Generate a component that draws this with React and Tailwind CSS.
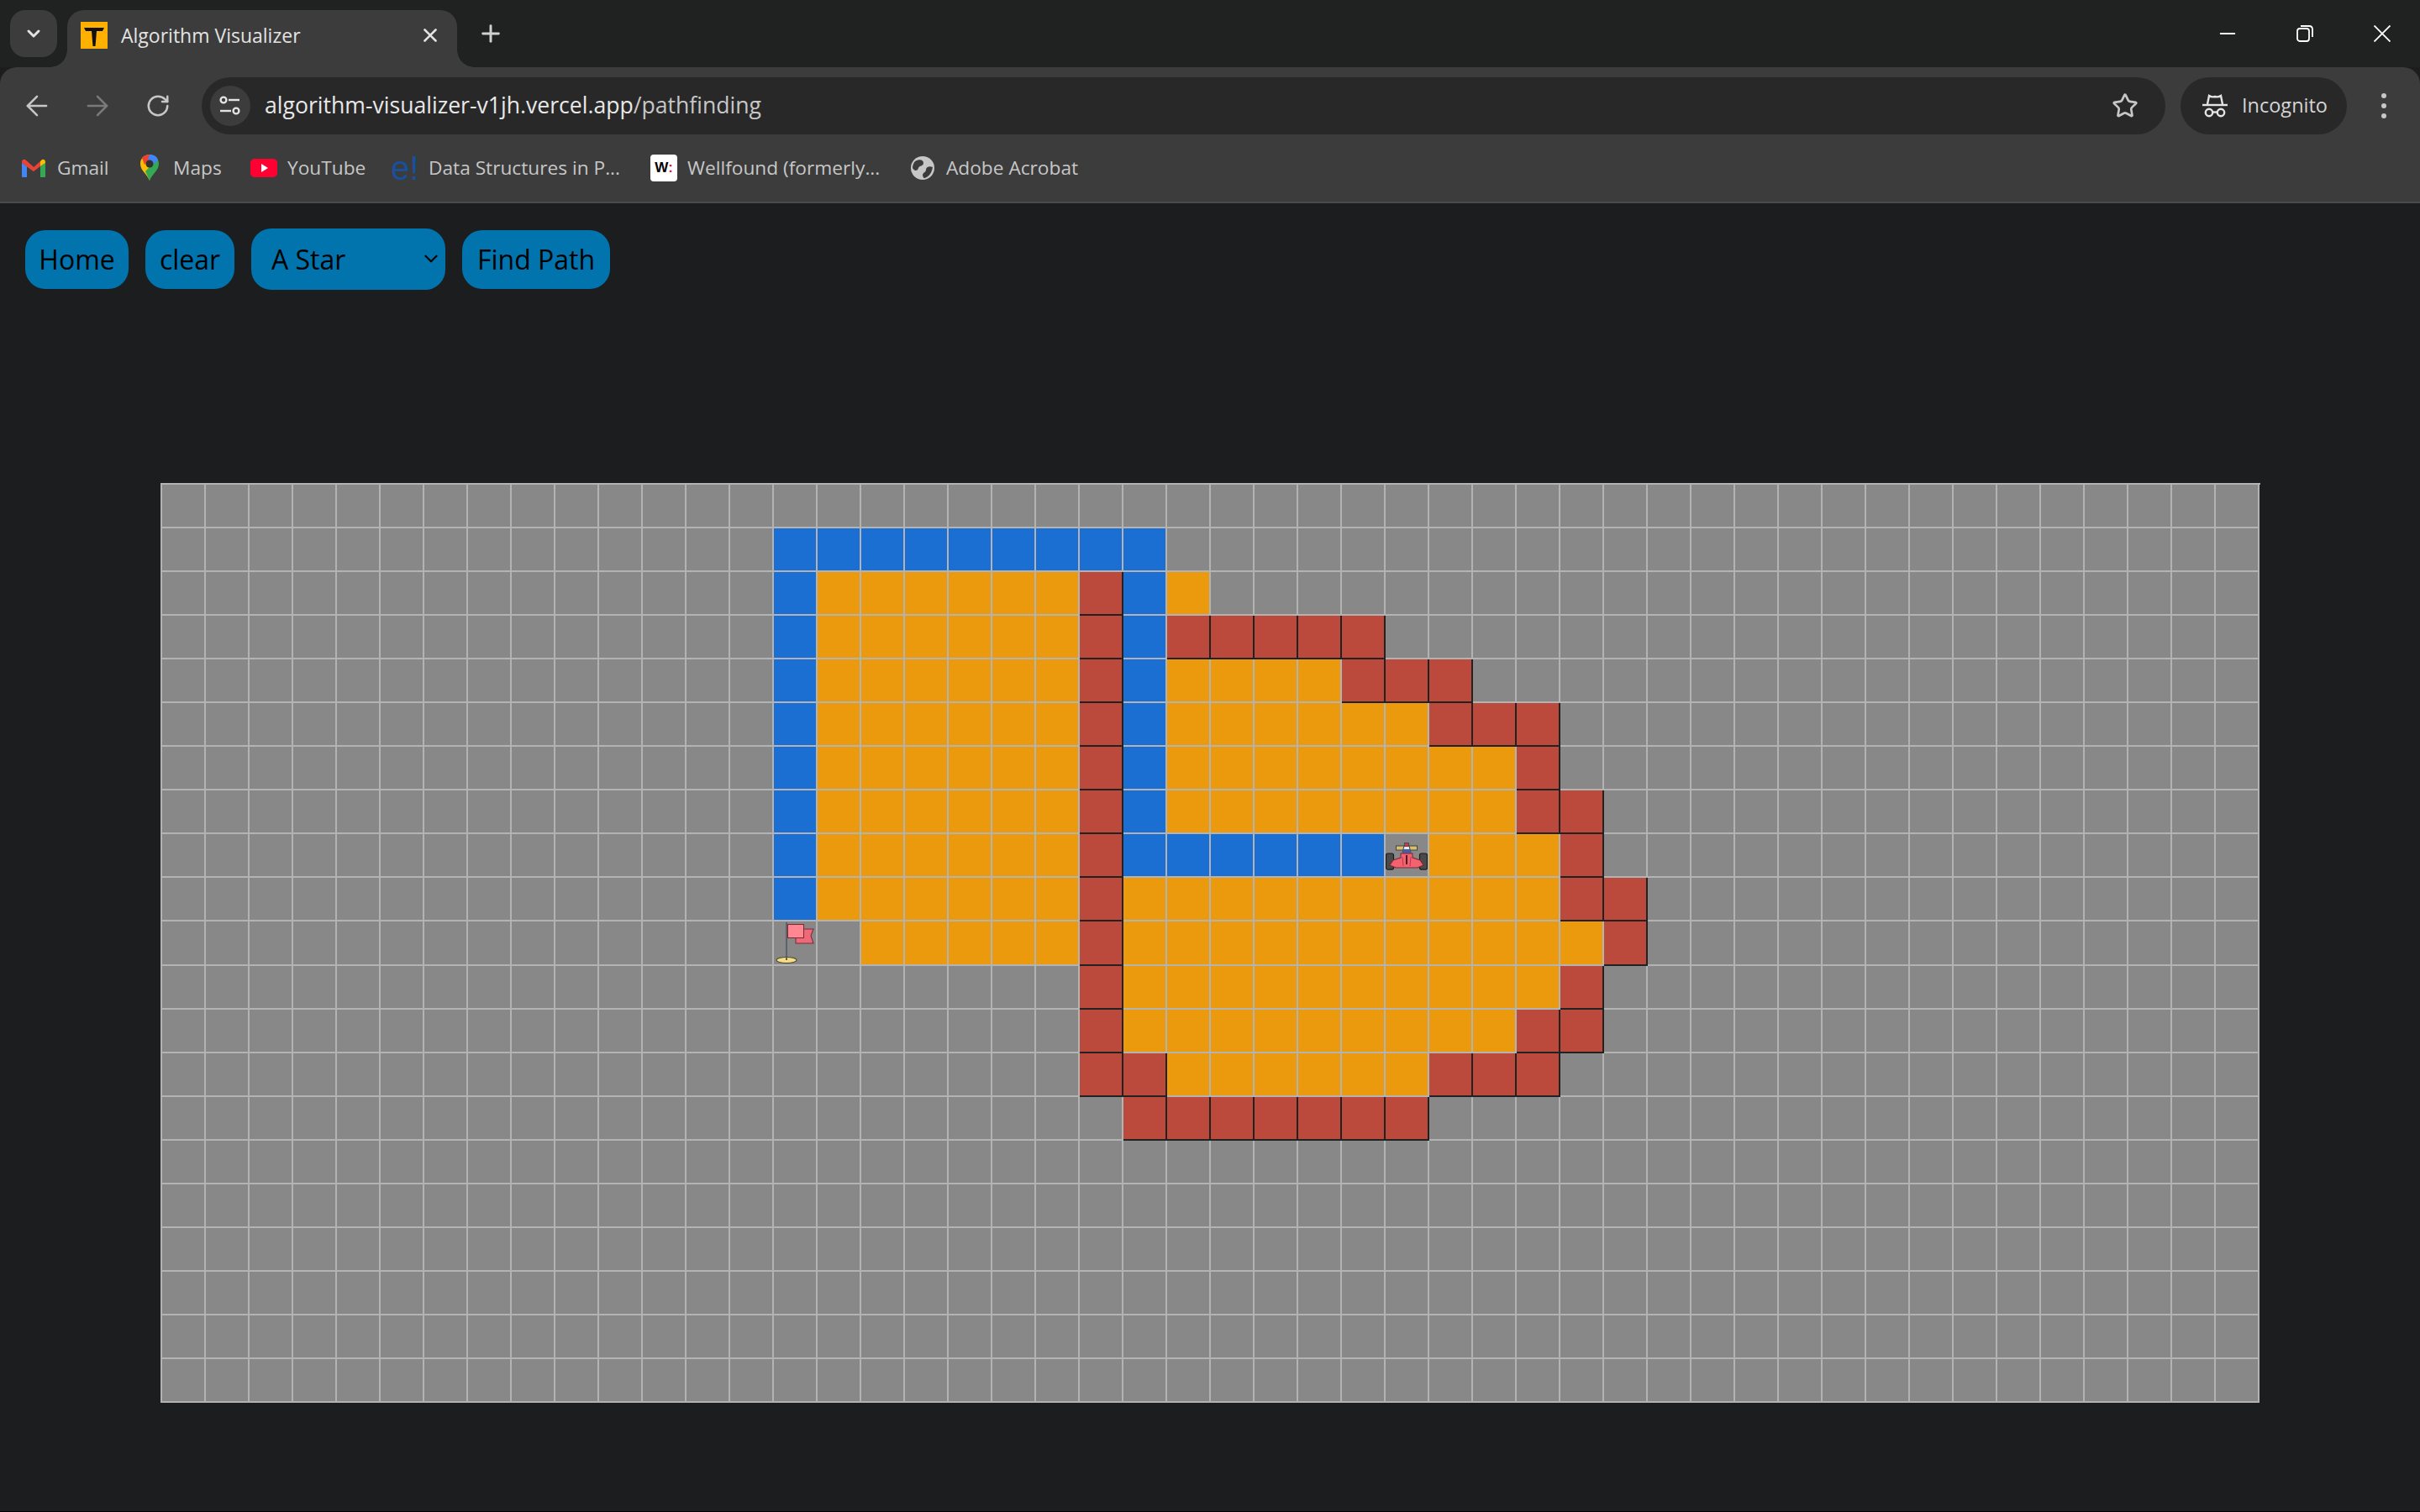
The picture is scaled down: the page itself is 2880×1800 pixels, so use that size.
// Pathfinding visualizer page inside an incognito browser window
import { ArrowLeft, ArrowRight, RotateCw, Star, X, Plus, ChevronDown, Minus } from 'lucide-react';

const UI_FONT = 'font-["Open_Sans","Liberation_Sans",sans-serif]';

// start col, end col, type per row: b = blue path, o = orange visited, r = red wall
const ROWS = {
  1: [[14, 22, 'b']],
  2: [[14, 14, 'b'], [15, 20, 'o'], [21, 21, 'r'], [22, 22, 'b'], [23, 23, 'o']],
  3: [[14, 14, 'b'], [15, 20, 'o'], [21, 21, 'r'], [22, 22, 'b'], [23, 27, 'r']],
  4: [[14, 14, 'b'], [15, 20, 'o'], [21, 21, 'r'], [22, 22, 'b'], [23, 26, 'o'], [27, 29, 'r']],
  5: [[14, 14, 'b'], [15, 20, 'o'], [21, 21, 'r'], [22, 22, 'b'], [23, 28, 'o'], [29, 31, 'r']],
  6: [[14, 14, 'b'], [15, 20, 'o'], [21, 21, 'r'], [22, 22, 'b'], [23, 30, 'o'], [31, 31, 'r']],
  7: [[14, 14, 'b'], [15, 20, 'o'], [21, 21, 'r'], [22, 22, 'b'], [23, 30, 'o'], [31, 32, 'r']],
  8: [[14, 14, 'b'], [15, 20, 'o'], [21, 21, 'r'], [22, 27, 'b'], [29, 31, 'o'], [32, 32, 'r']],
  9: [[14, 14, 'b'], [15, 20, 'o'], [21, 21, 'r'], [22, 31, 'o'], [32, 33, 'r']],
  10: [[16, 20, 'o'], [21, 21, 'r'], [22, 32, 'o'], [33, 33, 'r']],
  11: [[21, 21, 'r'], [22, 31, 'o'], [32, 32, 'r']],
  12: [[21, 21, 'r'], [22, 30, 'o'], [31, 32, 'r']],
  13: [[21, 22, 'r'], [23, 28, 'o'], [29, 31, 'r']],
  14: [[22, 28, 'r']],
};

const CELL = {
  b: 'bg-[#1b6fd2] border-[#b3b3b3]',
  o: 'bg-[#ea9a0c] border-[#b3b3b3]',
  r: 'bg-[#bb4a3c] border-[#222222]',
  g: 'bg-[#888888] border-[#b3b3b3]',
};

function cellType(r, c) {
  const run = (ROWS[r] || []).find(([a, b]) => c >= a && c <= b);
  return run ? run[2] : 'g';
}

function Car() {
  return (
    <svg viewBox="0 0 50 50" className="w-full h-full block">
      <rect x="12.5" y="14" width="25" height="5" fill="#d9c06a" stroke="#444" strokeWidth="1" />
      <rect x="0.5" y="23" width="9" height="19" rx="2" fill="#4a4a4a" stroke="#1c1c1c" strokeWidth="1.2" />
      <rect x="40.5" y="23" width="9" height="19" rx="2" fill="#4a4a4a" stroke="#1c1c1c" strokeWidth="1.2" />
      <path d="M9 31 L18 28 L18 23 L32 23 L32 28 L41 31 L45 37 L38 40 L12 40 L5 37 Z" fill="#f4616f" stroke="#7a2a34" strokeWidth="1" />
      <path d="M20 22 L22 14 L28 14 L30 22 Z" fill="#e8e8f0" stroke="#444" strokeWidth="1" />
      <rect x="20.5" y="18" width="9" height="4" fill="#4a5aa8" />
      <rect x="22.5" y="10.5" width="5" height="4" fill="#c93a48" stroke="#444" strokeWidth="0.8" />
      <path d="M25 25 V36" stroke="#4a1a22" strokeWidth="2" />
      <path d="M20 27 L21 38 M30 27 L29 38" stroke="#b83a4a" strokeWidth="1" />
    </svg>
  );
}

function Flag() {
  return (
    <svg viewBox="0 0 50 50" className="w-full h-full block">
      <ellipse cx="15" cy="46" rx="12" ry="3.5" fill="#f8dc84" stroke="#4a4a3a" strokeWidth="1" />
      <path d="M26 9 H47 L44 17 L47 26 H26 Z" fill="#ee6a78" stroke="#7a2a34" strokeWidth="1" />
      <rect x="16.5" y="3.5" width="19" height="16" fill="#ff8791" stroke="#7a2a34" strokeWidth="1" />
      <rect x="14" y="1" width="2" height="45" fill="#5d6266" />
    </svg>
  );
}

function Grid() {
  const cells = [];
  for (let r = 0; r < 21; r++) {
    for (let c = 0; c < 48; c++) {
      cells.push(
        <div key={`${r}-${c}`} className={`border-r-2 border-b-2 min-w-0 min-h-0 ${CELL[cellType(r, c)]}`}>
          {r === 8 && c === 28 && <Car />}
          {r === 10 && c === 14 && <Flag />}
        </div>
      );
    }
  }
  return (
    <div className="mx-auto mt-[230px] w-[2499px] h-[1095px] grid grid-cols-[repeat(48,minmax(0,1fr))] grid-rows-[repeat(21,minmax(0,1fr))] border-l-2 border-t-2 border-[#b3b3b3]">
      {cells}
    </div>
  );
}

function Favicon() {
  return (
    <svg viewBox="0 0 32 32" className="w-8 h-8 shrink-0">
      <rect width="32" height="32" fill="#ffb000" />
      <path d="M4 7 H28 L26 11 H19 L17.5 29 H14.5 L13 11 H6 Z" fill="#111" />
    </svg>
  );
}

function Gmail() {
  return (
    <svg viewBox="0 0 32 32" className="w-8 h-8">
      <path d="M2 10 V26 Q2 27 3 27 H8 V14 Z" fill="#4285f4" />
      <path d="M30 10 V26 Q30 27 29 27 H24 V14 Z" fill="#34a853" />
      <path d="M2 10 Q2 5 6 6 L16 15 L16 20 L2 10 Z" fill="#ea4335" />
      <path d="M8 8 L16 15 L24 8 V14 L16 20 L8 14 Z" fill="#ea4335" />
      <path d="M30 10 Q30 5 26 6 L24 8 V14 Z" fill="#fbbc04" />
    </svg>
  );
}

function Maps() {
  return (
    <svg viewBox="0 0 32 32" className="w-8 h-8">
      <path d="M16 0 C9 0 5 5 5 11 C5 19 13 23 16 31 L16 16 Z" fill="#fbbc04" />
      <path d="M16 0 C23 0 27 5 27 11 C27 19 19 23 16 31 L11 20 L22 8 Z" fill="#34a853" />
      <path d="M7 4 C9 1 13 0 16 0 L16 6 L10 12 Z" fill="#ea4335" />
      <path d="M16 0 C21 0 25 2 26 7 L20 12 L14 5 Z" fill="#4285f4" />
      <circle cx="16" cy="11" r="4.5" fill="#33302d" />
    </svg>
  );
}

function YouTube() {
  return (
    <svg viewBox="0 0 32 32" className="w-8 h-8">
      <rect x="0" y="5" width="32" height="22" rx="5" fill="#ff0033" />
      <path d="M13 11 L21 16 L13 21 Z" fill="#fff" />
    </svg>
  );
}

function Globe() {
  return (
    <svg viewBox="0 0 32 32" className="w-8 h-8">
      <circle cx="16" cy="16" r="14" fill="#c7c7c7" />
      <path d="M7 8 C12 5 17 6 17 10 C17 14 12 13 11 16 C10 20 6 20 4 16 C4 13 5 10 7 8 Z" fill="#3c3c3c" />
      <path d="M28 15 C24 13 20 15 20 18 C20 21 17 21 16 24 C16 26 17 28 18 28 C23 27 27 22 28 15 Z" fill="#3c3c3c" />
    </svg>
  );
}

const BOOKMARKS = [
  { label: 'Gmail', width: 'w-[138px]', icon: <Gmail /> },
  { label: 'Maps', width: 'w-[136px]', icon: <Maps /> },
  { label: 'YouTube', width: 'w-[168px]', icon: <YouTube /> },
  {
    label: 'Data Structures in P...',
    width: 'w-[308px]',
    icon: <span className='w-8 h-8 flex items-center justify-center text-[40px] leading-none text-[#17509c] font-["Liberation_Sans",sans-serif]'>e!</span>,
  },
  {
    label: 'Wellfound (formerly...',
    width: 'w-[308px]',
    icon: (
      <span className='w-8 h-8 rounded bg-white flex items-center justify-center text-[17px] font-bold text-black font-["Liberation_Sans",sans-serif]'>
        W<span className="text-[#e0202a]">:</span>
      </span>
    ),
  },
  { label: 'Adobe Acrobat', width: 'w-[204px]', icon: <Globe /> },
];

function TabStrip() {
  return (
    <div className="h-20 bg-[#202222] flex items-start pl-3 pt-3">
      <div className="w-14 h-14 rounded-[18px] bg-[#3c3c3c] flex items-center justify-center">
        <ChevronDown size={24} strokeWidth={3} className="text-[#e3e3e3]" />
      </div>
      <div className="relative ml-3 w-[464px] h-[68px] bg-[#3c3c3c] rounded-t-[20px] flex items-center pl-4 pr-[19px] pb-2">
        <div className="absolute bottom-0 -left-5 w-5 h-5 bg-[radial-gradient(circle_at_0_0,transparent_19.5px,#3c3c3c_20px)]" />
        <div className="absolute bottom-0 -right-5 w-5 h-5 bg-[radial-gradient(circle_at_100%_0,transparent_19.5px,#3c3c3c_20px)]" />
        <Favicon />
        <span className="ml-4 text-[23px] text-[#e3e3e3] whitespace-nowrap">Algorithm Visualizer</span>
        <X size={26} strokeWidth={2.4} className="ml-auto text-[#e3e3e3]" />
      </div>
      <Plus size={32} strokeWidth={2.2} className="ml-6 mt-[12px] text-[#d0d0d0]" />
      <div className="ml-auto flex items-center h-14">
        <div className="w-[92px] flex justify-center">
          <Minus size={28} strokeWidth={1.8} className="text-white" />
        </div>
        <div className="w-[92px] flex justify-center">
          <svg viewBox="0 0 20 20" className="w-5 h-5" fill="none" stroke="#fff" strokeWidth="1.8">
            <rect x="1" y="4" width="14" height="15" rx="3" />
            <path d="M5 1 H15 Q19 1 19 5 V14" />
          </svg>
        </div>
        <div className="w-[92px] mr-[-1px] flex justify-center">
          <svg viewBox="0 0 20 20" className="w-5 h-5" stroke="#fff" strokeWidth="1.8">
            <path d="M0.5 0.5 L19.5 19.5 M19.5 0.5 L0.5 19.5" />
          </svg>
        </div>
      </div>
    </div>
  );
}

function Toolbar() {
  return (
    <div className="h-[162px] bg-[#3c3c3c] rounded-t-[20px] border-b-2 border-[#4a4a4a]">
      <div className="h-[92px] flex items-center">
        <div className="w-[240px] flex items-center pl-[26px] gap-[44px] self-center">
          <ArrowLeft size={38} strokeWidth={1.6} className="text-[#c7c7c7] -ml-[1px]" />
          <ArrowRight size={38} strokeWidth={1.6} className="text-[#7a7a7a] -ml-[10px]" />
          <RotateCw size={30} strokeWidth={2} className="text-[#c7c7c7] -ml-[6px]" />
        </div>
        <div className="w-[2337px] h-[68px] rounded-full bg-[#282828] flex items-center pl-[10px] pr-[32px]">
          <div className="w-12 h-12 rounded-full bg-[#3c3c3c] flex items-center justify-center">
            <svg viewBox="0 0 28 24" className="w-7 h-6" fill="none" stroke="#e3e3e3" strokeWidth="2.4">
              <circle cx="6" cy="5" r="3.4" />
              <path d="M12 5 H25" />
              <path d="M2 18 H15" />
              <circle cx="21" cy="18" r="3.4" />
            </svg>
          </div>
          <span className="ml-[17px] text-[26.6px] text-[#e8e8e8] whitespace-nowrap">
            algorithm-visualizer-v1jh.vercel.app<span className="text-[#c7c7c7]">/pathfinding</span>
          </span>
          <Star size={32} strokeWidth={2} className="ml-auto text-[#c7c7c7]" />
        </div>
        <div className="ml-[18px] w-[198px] h-[68px] rounded-full bg-[#282828] flex items-center pl-[26px]">
          <svg viewBox="0 0 30 28" className="w-[30px] h-7" fill="none" stroke="#e3e3e3" strokeWidth="2.4">
            <path d="M0 13 H30" />
            <path d="M6 12 L8 2 Q11 4 15 3 Q19 4 22 2 L24 12" />
            <circle cx="8" cy="22" r="4.2" />
            <circle cx="22" cy="22" r="4.2" />
            <path d="M12 21.5 H18" />
          </svg>
          <span className="ml-[17px] text-[23.5px] text-[#d4d4d4] whitespace-nowrap">Incognito</span>
        </div>
        <div className="ml-[38px] w-3 flex flex-col items-center gap-[6px]">
          <div className="w-[6px] h-[6px] rounded-full bg-[#c7c7c7]" />
          <div className="w-[6px] h-[6px] rounded-full bg-[#c7c7c7]" />
          <div className="w-[6px] h-[6px] rounded-full bg-[#c7c7c7]" />
        </div>
      </div>
      <div className="h-[68px] flex items-center pl-6 pb-3">
        {BOOKMARKS.map((b) => (
          <div key={b.label} className={`flex items-center gap-3 shrink-0 ${b.width}`}>
            {b.icon}
            <span className="text-[22.7px] text-[#c7c7c7] whitespace-nowrap">{b.label}</span>
          </div>
        ))}
      </div>
    </div>
  );
}

const BTN = 'h-[70px] rounded-[24px] bg-[#0274ad] text-black text-[32px] flex items-center justify-center';

export default function App() {
  return (
    <div className={`w-[2880px] h-[1800px] bg-[#1c1d1f] flex flex-col overflow-hidden ${UI_FONT}`}>
      <TabStrip />
      <Toolbar />
      <div className="flex-1">
        {/* Controls */}
        <div className="flex items-center gap-5 pl-[30px] pt-[30px]">
          <button className={`${BTN} w-[123px]`}>Home</button>
          <button className={`${BTN} w-[106px]`}>clear</button>
          <div className="relative">
            <select className="w-[231px] h-[73px] rounded-[24px] bg-[#0274ad] text-black text-[32px] pl-[24px] appearance-none outline-none">
              <option>A Star</option>
            </select>
            <ChevronDown size={26} strokeWidth={2} className="absolute right-[4px] top-[23px] text-black pointer-events-none" />
          </div>
          <button className={`${BTN} w-[176px]`}>Find Path</button>
        </div>
        <Grid />
      </div>
      <div className="h-px bg-black" />
    </div>
  );
}
